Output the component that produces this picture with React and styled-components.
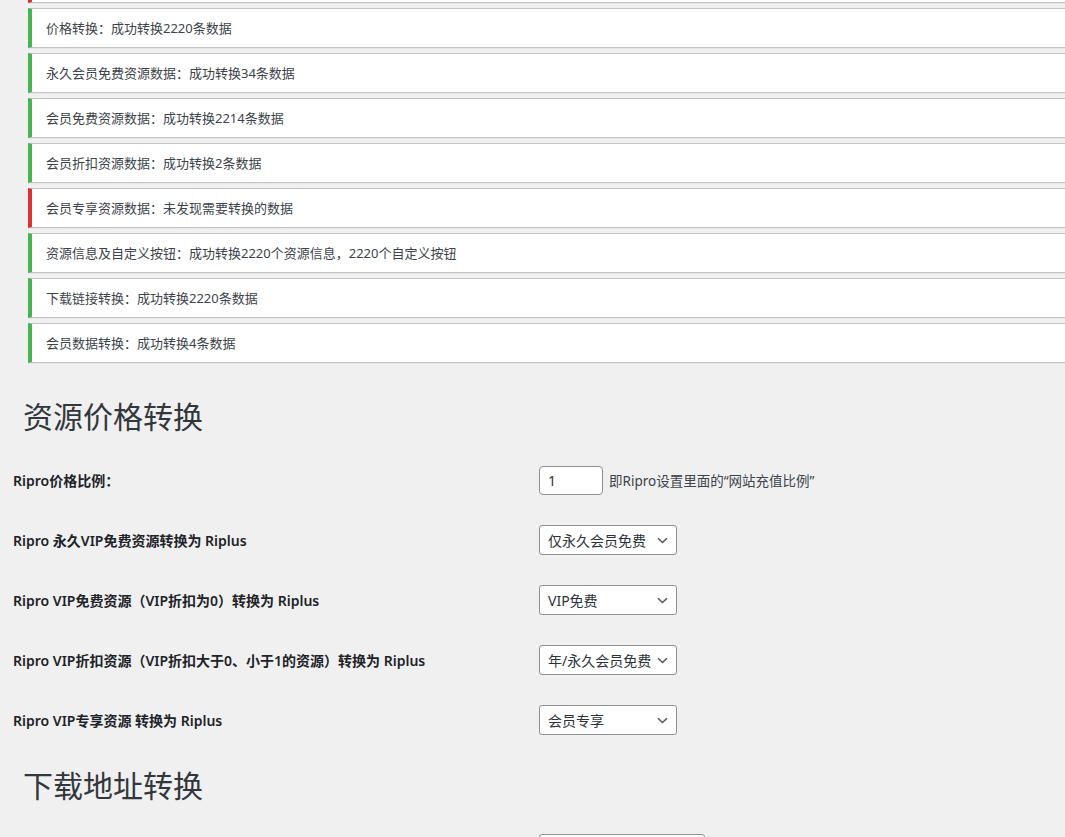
import styled, { createGlobalStyle } from "styled-components";

const GlobalStyle = createGlobalStyle`
  html, body {
    margin: 0;
    padding: 0;
    background: #f0f0f1;
    overflow: hidden;
  }
  body {
    font-family: "Noto Sans", "Noto Sans CJK SC", sans-serif;
    font-size: 13px;
    color: #3c434a;
  }
`;

const Page = styled.div`
  width: 1065px;
  height: 837px;
  overflow: hidden;
`;

const Notices = styled.div`
  display: flex;
  flex-direction: column;
  gap: 5px;
  margin: -37px -30px 0 28px;
`;

const Notice = styled.div`
  background: #fff;
  border: 1px solid #c3c4c7;
  border-left: 4px solid ${(p) => (p.$error ? "#dc3232" : "#46b450")};
  box-shadow: 0 1px 1px rgba(0, 0, 0, 0.04);
  padding: 1px 12px;

  p {
    margin: 6px 0;
    padding: 2px;
    height: 20px;
    line-height: 20px;
    font-size: 13px;
    color: #3c434a;
  }
`;

const Heading = styled.h2`
  margin: ${(p) => p.$top}px 0 14px 23px;
  font-size: 30px;
  line-height: 39px;
  font-weight: 400;
  color: #32373c;
`;

const Row = styled.div`
  display: grid;
  grid-template-columns: 539px auto;
  align-items: center;
  height: 60px;
`;

const Label = styled.div`
  padding-left: 13px;
  font-size: 14px;
  font-weight: 600;
  color: #1d2327;
`;

const Field = styled.div`
  display: flex;
  align-items: center;
  gap: 6px;
`;

const Input = styled.input`
  box-sizing: border-box;
  width: 64px;
  height: 29px;
  padding: 0 8px;
  border: 1px solid #8c8f94;
  border-radius: 4px;
  background: #fff;
  font-family: inherit;
  font-size: 14px;
  color: #2c3338;
  outline: none;
`;

const Hint = styled.span`
  font-size: 13.5px;
  color: #3c434a;
`;

const SelectWrap = styled.div`
  position: relative;
  width: ${(p) => p.$w || 138}px;
`;

const Select = styled.select`
  box-sizing: border-box;
  appearance: none;
  width: 100%;
  height: 30px;
  padding: 0 24px 0 8px;
  border: 1px solid #8c8f94;
  border-radius: 3px;
  background: #fff;
  font-family: inherit;
  font-size: 14px;
  color: #2c3338;
  outline: none;
`;

const Chevron = styled.svg`
  position: absolute;
  right: 9px;
  top: 12px;
  pointer-events: none;
`;

const Arrow = () => (
  <Chevron width="11" height="7" viewBox="0 0 11 7">
    <path d="M1 1.2l4.5 4.3 4.5-4.3" fill="none" stroke="#50575e" strokeWidth="1.5" />
  </Chevron>
);

const notices = [
  { text: "", error: true },
  { text: "价格转换：成功转换2220条数据" },
  { text: "永久会员免费资源数据：成功转换34条数据" },
  { text: "会员免费资源数据：成功转换2214条数据" },
  { text: "会员折扣资源数据：成功转换2条数据" },
  { text: "会员专享资源数据：未发现需要转换的数据", error: true },
  { text: "资源信息及自定义按钮：成功转换2220个资源信息，2220个自定义按钮" },
  { text: "下载链接转换：成功转换2220条数据" },
  { text: "会员数据转换：成功转换4条数据" },
];

const selects = [
  { label: "Ripro 永久VIP免费资源转换为 Riplus", value: "仅永久会员免费" },
  { label: "Ripro VIP免费资源（VIP折扣为0）转换为 Riplus", value: "VIP免费" },
  { label: "Ripro VIP折扣资源（VIP折扣大于0、小于1的资源）转换为 Riplus", value: "年/永久会员免费" },
  { label: "Ripro VIP专享资源 转换为 Riplus", value: "会员专享" },
];

export default function App() {
  return (
    <Page>
      <GlobalStyle />
      <Notices>
        {notices.map((n, i) => (
          <Notice key={i} $error={n.error}>
            <p>{n.text}</p>
          </Notice>
        ))}
      </Notices>

      <Heading $top={34}>资源价格转换</Heading>
      <Row>
        <Label>Ripro价格比例：</Label>
        <Field>
          <Input type="text" defaultValue="1" />
          <Hint>即Ripro设置里面的“网站充值比例”</Hint>
        </Field>
      </Row>
      {selects.map((s) => (
        <Row key={s.label}>
          <Label>{s.label}</Label>
          <SelectWrap>
            <Select defaultValue={s.value}>
              <option>{s.value}</option>
            </Select>
            <Arrow />
          </SelectWrap>
        </Row>
      ))}

      <Heading $top={16}>下载地址转换</Heading>
      <Row>
        <Label />
        <SelectWrap $w={166}>
          <Select defaultValue="">
            <option value=""></option>
          </Select>
        </SelectWrap>
      </Row>
    </Page>
  );
}
